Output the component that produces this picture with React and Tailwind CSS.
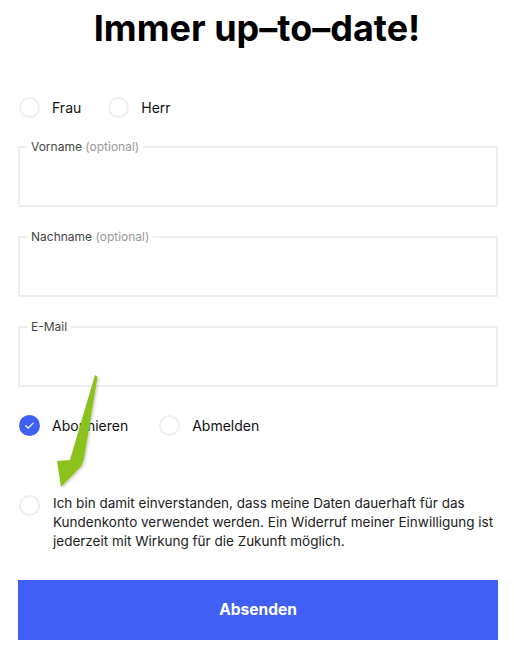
import React, { useState } from 'react';

const font = { fontFamily: 'Inter, "Noto Sans", sans-serif' };

function Radio({ checked, label, onClick }) {
  return (
    <label className="flex items-center gap-3 cursor-pointer" onClick={onClick}>
      {checked ? (
        <span className="flex h-[21px] w-[21px] items-center justify-center rounded-full bg-[#3f5ff5]">
          <svg width="11" height="11" viewBox="0 0 12 12" fill="none">
            <path d="M2 6.3l2.6 2.6L10 3.4" stroke="white" strokeWidth="1.4" strokeLinecap="round" strokeLinejoin="round" />
          </svg>
        </span>
      ) : (
        <span className="h-[21px] w-[21px] rounded-full border-2 border-[#efefef] bg-white" />
      )}
      <span className="text-[14px] text-[#111]">{label}</span>
    </label>
  );
}

function Field({ label, optional }) {
  return (
    <fieldset className="h-[67px] border-2 border-[#eeeeee] px-[7px] pb-0">
      <legend className="px-[4px] text-[12px] leading-[14px] text-[#444]">
        {label}
        {optional && <span className="text-[#999]"> (optional)</span>}
      </legend>
      <input className="w-full bg-transparent text-[15px] outline-none" />
    </fieldset>
  );
}

export default function App() {
  const [salutation, setSalutation] = useState(null);
  const [sub, setSub] = useState('on');
  const [agree, setAgree] = useState(false);

  return (
    <div className="relative w-[514px] bg-white" style={font}>
      <h1 className="pt-[6px] text-center text-[36px] font-bold leading-[44px] text-black">
        Immer up–to–date!
      </h1>

      <div className="mx-[18px] w-[480px]">
        <div className="mt-[47px] flex gap-[27px] pl-[1px]">
          <Radio label="Frau" checked={salutation === 'f'} onClick={() => setSalutation('f')} />
          <Radio label="Herr" checked={salutation === 'm'} onClick={() => setSalutation('m')} />
        </div>

        <div className="mt-[22px] flex flex-col gap-[23px]">
          <Field label="Vorname" optional />
          <Field label="Nachname" optional />
          <Field label="E-Mail" />
        </div>

        <div className="mt-[28px] flex gap-[31px] pl-[1px]">
          <Radio label="Abonnieren" checked={sub === 'on'} onClick={() => setSub('on')} />
          <Radio label="Abmelden" checked={sub === 'off'} onClick={() => setSub('off')} />
        </div>

        <div className="mt-[58px] flex items-start gap-[13px] pl-[1px]" onClick={() => setAgree(!agree)}>
          <span className="mt-[1px] h-[21px] w-[21px] shrink-0 rounded-full border-2 border-[#efefef] bg-white" />
          <p className="text-[13.5px] leading-[19px] text-[#222]">
            Ich bin damit einverstanden, dass meine Daten dauerhaft für das Kundenkonto verwendet werden. Ein Widerruf meiner Einwilligung ist jederzeit mit Wirkung für die Zukunft möglich.
          </p>
        </div>

        <button className="mt-[29px] mb-[10px] flex h-[60px] w-full items-center justify-center bg-[#4060f5] text-[15.5px] font-bold text-white">
          Absenden
        </button>
      </div>

      <svg className="pointer-events-none absolute left-0 top-0" width="514" height="650">
        <defs>
          <filter id="sh" x="-50%" y="-50%" width="200%" height="200%">
            <feDropShadow dx="1" dy="1" stdDeviation="1.5" floodColor="#000" floodOpacity="0.25" />
          </filter>
        </defs>
        <path d="M95 375 L97.5 377 L84 459 L81.5 466 L61 487 L57 461 L70 460 Z" fill="#8cc21e" filter="url(#sh)" />
      </svg>
    </div>
  );
}
